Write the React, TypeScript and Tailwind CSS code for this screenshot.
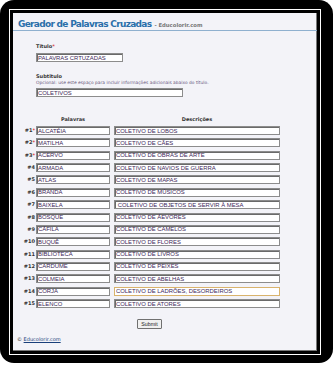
import React from "react";

const rows: [string, string][] = [
  ["ALCATÉIA", "COLETIVO DE LOBOS"],
  ["MATILHA", "COLETIVO DE CÃES"],
  ["ACERVO", "COLETIVO DE OBRAS DE ARTE"],
  ["ARMADA", "COLETIVO DE NAVIOS DE GUERRA"],
  ["ATLAS", "COLETIVO DE MAPAS"],
  ["BRANDA", "COLETIVO DE MÚSICOS"],
  ["BAIXELA", " COLETIVO DE OBJETOS DE SERVIR À MESA"],
  ["BOSQUE", "COLETIVO DE ÁEVORES"],
  ["CÁFILA", "COLETIVO DE CAMELOS"],
  ["BUQUÊ", "COLETIVO DE FLORES"],
  ["BIBLIOTECA", "COLETIVO DE LIVROS"],
  ["CARDUME", "COLETIVO DE PEIXES"],
  ["COLMEIA", "COLETIVO DE ABELHAS"],
  ["CORJA", "COLETIVO DE LADRÕES, DESORDEIROS"],
  ["ELENCO", "COLETIVO DE ATORES"],
];

const field =
  "block h-[9px] bg-white border border-[#8c8c8c] shadow-[inset_1px_1px_0_#6a6a6a] px-[1px] text-[5.9px] leading-[7px] text-[#40295a] font-['Liberation_Sans',sans-serif] outline-none";

export default function App() {
  return (
    <div className="w-[334px] h-[367px] bg-white">
      <div className="w-[333px] h-[363px] bg-black rounded-[14px] pt-[9px] pl-[9px] pr-[12px] pb-[8px]">
        <div className="h-full border border-white">
          <div className="h-full border-[3px] border-black bg-[#f3f3f8] shadow-[inset_-1px_-1px_0_#777] font-['DejaVu_Sans',sans-serif]">
            {/* Header */}
            <div className="h-[18px] pl-[5px] pt-[6px] border-b border-[#8fb0cf] flex items-baseline gap-[3px]">
              <span className="text-[9px] leading-[10px] font-bold text-[#2a6faa] tracking-[-0.7px]">
                Gerador de Palavras Cruzadas
              </span>
              <span className="text-[5.3px] leading-[6px] font-bold text-[#777]">
                - Educolorir.com
              </span>
            </div>

            {/* Title & subtitle */}
            <div className="pl-[23px]">
              <div className="mt-[11px] text-[5px] leading-[8px] font-bold text-[#333]">
                Título<span className="text-[#d33]">*</span>
              </div>
              <input readOnly defaultValue="PALAVRAS CRTUZADAS" className={`${field} w-[87px] mt-[3px]`} />
              <div className="mt-[10px] text-[5px] leading-[8px] font-bold text-[#333]">Subtitulo</div>
              <div className="text-[4.4px] leading-[6px] text-[#6a5a80] whitespace-nowrap">
                Opcional: use este espaço para incluir informações adicionais abaixo do título.
              </div>
              <input readOnly defaultValue="COLETIVOS" className={`${field} w-[147px] mt-[2px]`} />
            </div>

            {/* Column headers */}
            <div className="mt-[18px] flex text-[5px] leading-[8px] font-bold text-[#333]">
              <div className="w-[23px]" />
              <div className="w-[74px] text-center">Palavras</div>
              <div className="w-[4px]" />
              <div className="w-[166px] text-center">Descrições</div>
            </div>

            {/* Rows */}
            <div className="mt-[3px]">
              {rows.map(([w, d], i) => (
                <div key={i} className="h-[12.37px] flex items-start">
                  <div className="w-[22px] mr-[1px] text-right text-[5px] leading-[9px] font-bold text-[#333] whitespace-nowrap">
                    #{i + 1}
                    {i < 3 && <span className="text-[#d33]">*</span>}
                  </div>
                  <input readOnly defaultValue={w} className={`${field} w-[74px]`} />
                  <input
                    readOnly
                    defaultValue={d}
                    className={`${field} w-[166px] ml-[4px] ${i === 13 ? "border-[#d9b36c] shadow-none" : ""}`}
                  />
                </div>
              ))}
            </div>

            {/* Submit */}
            <div className="mt-[8px] pl-[124px] flex">
              <button className="h-[10px] w-[25px] bg-[#f0f0f0] border border-[#707070] rounded-[1px] text-[5.3px] leading-[8px] text-[#222] font-['Liberation_Sans',sans-serif]">
                Submit
              </button>
            </div>

            {/* Footer */}
            <div className="mt-[6px] pl-[4px] text-[5px] leading-[8px] text-[#333]">
              © <a className="underline text-[#1a3f7a]">Educolorir.com</a>
            </div>
          </div>
        </div>
      </div>
    </div>
  );
}
